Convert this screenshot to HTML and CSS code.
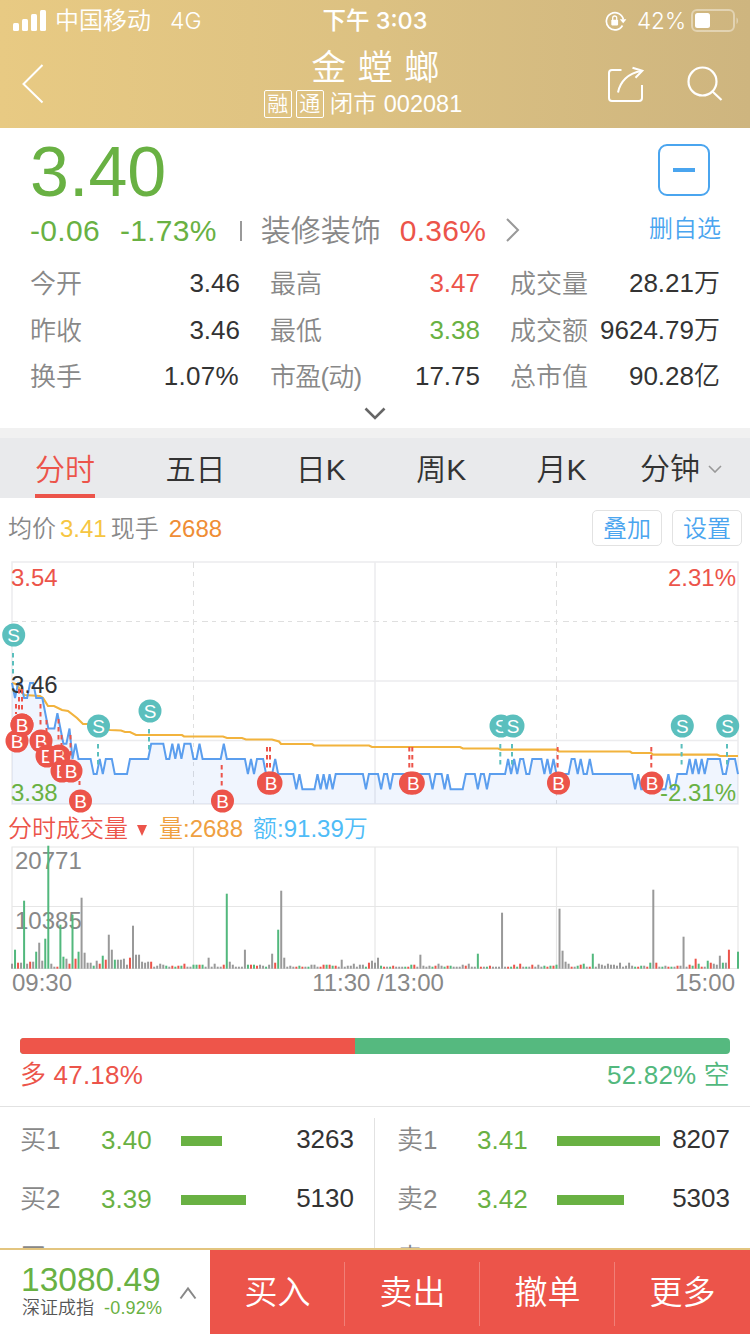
FILE: index.html
```html
<!DOCTYPE html>
<html lang="zh-CN">
<head>
    <meta charset="UTF-8">
    <meta name="viewport" content="width=device-width, initial-scale=1.0">
    <title>金螳螂 002081</title>
    <link rel="stylesheet" href="styles.css">
</head>
<body>

    <header class="header">
        <div class="status">
            <div class="status-left">
                <svg width="34" height="22" viewBox="0 0 34 22" fill="#fff">
                    <rect x="0" y="13" width="6" height="8" rx="1.5"/>
                    <rect x="9" y="9" width="6" height="12" rx="1.5"/>
                    <rect x="18" y="4" width="6" height="17" rx="1.5"/>
                    <rect x="27" y="0" width="6" height="21" rx="1.5"/>
                </svg>
                <span class="carrier">中国移动</span>
                <span class="network">4G</span>
            </div>
            <div class="status-time">下午 3:03</div>
            <div class="status-right">
                <svg width="22" height="20" viewBox="0 0 22 20" fill="none" stroke="#fff">
                    <path d="M17.5 14.5A8.6 8.6 0 1 1 18.4 8.5" stroke-width="1.7"/>
                    <path d="M14.8 8.2h6.6l-3.2 4z" fill="#fff" stroke="none"/>
                    <rect x="6.3" y="8.8" width="6.8" height="5.6" rx="0.8" fill="#fff" stroke="none"/>
                    <path d="M7.7 9V7a2 2 0 0 1 4 0v2" stroke-width="1.3"/>
                </svg>
                <span class="battery-text">42%</span>
                <svg width="48" height="24" viewBox="0 0 48 24" fill="none">
                    <rect x="1" y="1" width="42" height="21" rx="5" stroke="#fff" stroke-opacity="0.4" stroke-width="2"/>
                    <rect x="4" y="4" width="15" height="15" rx="2.5" fill="#fff"/>
                    <path d="M45.5 8.5c2 1 2 5.5 0 6.5z" fill="#fff" fill-opacity="0.4"/>
                </svg>
            </div>
        </div>
        <div class="nav">
            <svg class="back" width="22" height="40" viewBox="0 0 22 40" fill="none" stroke="#fff" stroke-width="2">
                <path d="M20.5 1L1.5 20L20.5 38.5"/>
            </svg>
            <div class="nav-title">
                <h1>金螳螂</h1>
                <p><i>融</i><i>通</i><span>闭市</span><span>002081</span></p>
            </div>
            <div class="nav-actions">
                <svg width="38" height="38" viewBox="0 0 38 38" fill="none" stroke="#fff" stroke-width="2">
                    <path d="M14.5 4H5a3 3 0 0 0-3 3v25a3 3 0 0 0 3 3h27a3 3 0 0 0 3-3V19"/>
                    <path d="M11 26.5C13 16 21 7 34.5 5"/>
                    <path d="M25.5 1.8L35.3 4.8L28.5 11.8"/>
                </svg>
                <svg width="36" height="36" viewBox="0 0 36 36" fill="none" stroke="#fff" stroke-width="2.2">
                    <circle cx="15.5" cy="15.5" r="14"/>
                    <path d="M25.5 25.5L34.5 34"/>
                </svg>
            </div>
        </div>
    </header>

    <section class="quote">
        <div class="quote-top">
            <div class="price green">3.40</div>
            <div class="remove"></div>
        </div>
        <div class="quote-change">
            <span class="green">-0.06</span>
            <span class="green percent">-1.73%</span>
            <span class="bar"></span>
            <span class="sector">装修装饰</span>
            <span class="red">0.36%</span>
            <svg width="14" height="24" viewBox="0 0 14 24" fill="none" stroke="#999" stroke-width="2">
                <path d="M1 1L12 12L1 23"/>
            </svg>
            <span class="remove-text">删自选</span>
        </div>
        <div class="stats">
            <div><span>今开</span><b>3.46</b></div>
            <div><span>最高</span><b class="red">3.47</b></div>
            <div><span>成交量</span><b>28.21万</b></div>
            <div><span>昨收</span><b>3.46</b></div>
            <div><span>最低</span><b class="green">3.38</b></div>
            <div><span>成交额</span><b>9624.79万</b></div>
            <div><span>换手</span><b class="pct">1.07%</b></div>
            <div><span class="pe">市盈(动)</span><b>17.75</b></div>
            <div><span>总市值</span><b>90.28亿</b></div>
        </div>
        <svg class="more" width="22" height="14" viewBox="0 0 22 14" fill="none" stroke="#666" stroke-width="2.6">
            <path d="M1.5 1.5L11 11L20.5 1.5"/>
        </svg>
    </section>

    <nav class="tabs">
        <a class="active">分时</a>
        <a>五日</a>
        <a>日K</a>
        <a>周K</a>
        <a>月K</a>
        <a class="minutes">分钟
            <svg width="14" height="8" viewBox="0 0 14 8" fill="none" stroke="#999" stroke-width="1.6">
                <path d="M1 1L7 7L13 1"/>
            </svg>
        </a>
    </nav>

    <div class="chart-info">
        <span>均价</span>
        <span class="avg">3.41</span>
        <span>现手</span>
        <span class="hands">2688</span>
        <div class="chart-buttons">
            <button>叠加</button>
            <button>设置</button>
        </div>
    </div>

    <svg class="chart" id="priceChart" width="750" height="252" viewBox="0 560 750 252"></svg>

    <div class="volume-info">
        <span class="red">分时成交量</span>
        <svg width="10" height="11" viewBox="0 0 10 11"><path d="M0 0h10l-5 11z" fill="#ec544a"/></svg>
        <span class="vol">量:2688</span>
        <span class="amount">额:91.39万</span>
    </div>

    <svg class="chart" id="volumeChart" width="750" height="125" viewBox="0 845 750 125"></svg>

    <div class="time-axis">
        <span>09:30</span>
        <span class="noon">11:30 /13:00</span>
        <span>15:00</span>
    </div>

    <div class="ratio">
        <div class="ratio-bar"><div class="ratio-buy" style="width: 47.18%"></div></div>
        <div class="ratio-text">
            <span class="red">多 47.18%</span>
            <span class="teal">52.82% 空</span>
        </div>
    </div>

    <section class="orders">
        <div class="side" id="buy"></div>
        <div class="side" id="sell"></div>
    </section>

    <footer class="footer">
        <div class="index">
            <div>
                <div class="index-value green">13080.49</div>
                <div class="index-name">深证成指 <span class="green">-0.92%</span></div>
            </div>
            <svg width="18" height="14" viewBox="0 0 18 14" fill="none" stroke="#888" stroke-width="2">
                <path d="M1.5 12.5L9 2.5L16.5 12.5"/>
            </svg>
        </div>
        <a>买入</a>
        <a>卖出</a>
        <a>撤单</a>
        <a>更多</a>
    </footer>

    <script>
        const left = 12;
        const step = 726 / 240;

        // Price per minute, in cents above 3.38
        const prices =
            '878877887776555654453433333223' +
            '233322222333333344444334343444' +
            '334333333343333333232333222322' +
            '222212111112121212222222222122' +
            '221221222222222222212221211111' +
            '222212212222223232332233332323' +
            '222223323223222222222222221211' +
            '1111111211222232323233333223332';

        // Average price line
        const average = '12,683 16,684 19,688 24,695 40,696 43,698 48,706 54,706 62,710 68,711 ' +
            '77,718 83,724 90,724 100,728 110,730 121,730.5 125,732 130,732 136,735 182,735 184,736.5 ' +
            '223,736.5 227,738 242,738 246,739.5 272,739.5 279,741.5 281,744 312,744 314,745.5 369,745.5 ' +
            '372,747 460,747 463,748.5 498,748.5 501,749.7 557,749.7 559,751.5 630,751.5 632,753 651,753 ' +
            '653,754.7 717,754.7 720,756 738,756';

        // Trade marks: type, badge x, badge y, stem x, stem top, stem bottom
        // An empty type is a badge hidden under the next one
        const marks = [
            ['S', 13.7, 635, 13, 653, 674],
            ['B', 17, 741, 16, 704, 714],
            ['', 22, 725, 19, 689, 710],
            ['B', 22, 725, 22, 689, 710],
            ['B', 41, 741, 40.5, 704, 725],
            ['B', 47, 756, 46.5, 720, 741],
            ['B', 59, 756, 58.5, 719, 740],
            ['B', 62, 771, 61.5, 735, 756],
            ['B', 71, 771, 70.5, 735, 756],
            ['B', 80.5, 801, 79.5, 765, 785],
            ['S', 98.5, 726, 98, 744, 765],
            ['S', 150, 711, 149, 729, 750],
            ['B', 222.5, 801, 221.7, 765, 786],
            ['', 268.5, 783, 267, 747, 768],
            ['B', 271, 783, 270, 747, 768],
            ['', 410.5, 783, 409.3, 747, 768],
            ['B', 413.3, 783, 412.3, 747, 768],
            ['S', 501, 726, 500.3, 744, 765],
            ['S', 513, 726, 512, 744, 765],
            ['B', 558.5, 783, 557.6, 747, 768],
            ['B', 652, 783, 651.3, 747, 768],
            ['S', 682.3, 726, 681.6, 744, 765],
            ['S', 727.7, 726, 727, 744, 765]
        ];

        // Volume per minute: n = flat, g = down, r = up
        const volumes = ('n5 g19 r6 n6 g68 n5 r7 n7 g17 n26 n8 g30 g123 n5 n2 r2 g44 g12 n10 r5 ' +
            'g54 r10 g17 n71 n16 n6 n6 g3 n8 r5 g13 r9 n34 n19 g9 n9 n9 n10 n4 r11 ' +
            'n43 n14 n14 n7 n6 n7 r7 n2 n3 n5 n4 g3 n2 r3 g2 r3 g3 r5 n2 n2 ' +
            'g4 g4 r4 g4 n2 n11 n2 n5 n2 n2 r4 g75 n7 n4 n2 n2 n2 n19 g4 r4 ' +
            'g4 r3 n4 n3 g2 n4 n15 r6 g39 n78 n11 n2 n3 n2 r2 g3 r2 n2 g2 n4 ' +
            'n4 n2 r2 r4 g4 r4 g3 r3 n2 n9 n2 n3 n3 n5 n2 n4 n4 g2 r6 n8 ' +
            'n6 n11 g3 r2 n2 g2 r3 n2 n2 n2 g2 r2 g4 r4 n2 n14 n3 n2 n3 g2 ' +
            'r3 n5 n3 g2 r3 g3 n2 n2 n2 n4 r3 n5 n2 n2 g15 r2 n2 g2 r3 n2 ' +
            'n2 n2 n56 n2 r2 g2 r4 g2 r5 n2 g2 n2 r4 n2 n4 n2 g3 r2 g3 r3 ' +
            'g4 n60 n18 n7 n5 r2 n2 g3 r4 g5 n2 r2 g15 n2 n5 n4 n3 n5 n4 n4 ' +
            'n3 n6 n2 n3 n6 n3 g2 r2 g3 n3 r2 g6 n79 r6 n2 g2 n3 r2 g2 n2 ' +
            'r3 n3 n32 n2 r4 g3 r10 g5 r2 n2 g8 r6 n5 n4 n13 g6 n6 r19 n0 n0 g17').split(' ');

        const priceY = level => 804.5 - level * 15.2;
        const points = prices.split('').map((p, i) => `${(left + i * step).toFixed(1)},${priceY(+p).toFixed(1)}`).join(' ');

        let svg = `
            <g stroke="#ececee" stroke-width="1.5" fill="none">
                <path d="M12 562H738V804H12Z M12 681H738 M12 740.5H738 M375 562V804"/>
                <path d="M12 621.5H738 M193.5 562V804 M556.5 562V804" stroke="#dfdfdf" stroke-width="1" stroke-dasharray="6 4 4 5"/>
            </g>
            <polygon points="12,804 ${points} 738,804" fill="#3c82ee" fill-opacity="0.08"/>
            <polyline points="${average}" fill="none" stroke="#f2b33d" stroke-width="2.2"/>
            <polyline points="${points}" fill="none" stroke="#5b9eee" stroke-width="2"/>
            <text x="11" y="693" fill="#333">3.46</text>
            <text x="11" y="586" fill="#ec544a">3.54</text>
            <text x="11" y="801" fill="#69b143">3.38</text>
            <text x="736" y="586" fill="#ec544a" text-anchor="end">2.31%</text>`;

        marks.forEach(([type, x, y, sx, top, bottom]) => {
            const color = type === 'S' ? '#5bbfbd' : '#ec544a';
            svg += `
                <path d="M${sx} ${top}V${bottom}" stroke="${color}" stroke-width="2" stroke-dasharray="4.5 3.5"/>
                <circle cx="${x}" cy="${y}" r="11.5" fill="${color}"/>
                <text class="mark" x="${x}" y="${y + 7}">${type}</text>`;
        });
        svg += '<text x="736" y="801" fill="#69b143" text-anchor="end">-2.31%</text>';
        document.getElementById('priceChart').innerHTML = svg;

        const volumeColors = { n: '#999', g: '#52b87d', r: '#ec544a' };
        svg = `
            <path d="M12 847H738V968.5H12Z M12 906.5H738 M193.5 847V968 M375 847V968 M556.5 847V968" fill="none" stroke="#e6e6e6" stroke-width="1.2"/>
            <text x="15" y="869" fill="#888">20771</text>
            <text x="15" y="929" fill="#888">10385</text>`;
        volumes.forEach((v, i) => {
            const h = +v.slice(1);
            svg += `<rect x="${(left - 1 + i * step).toFixed(2)}" y="${968.7 - h}" width="2" height="${h}" fill="${volumeColors[v[0]]}"/>`;
        });
        document.getElementById('volumeChart').innerHTML = svg;

        // Order book: label, price, bar width, amount
        const orders = {
            buy: [['买1', '3.40', 41, 3263], ['买2', '3.39', 65, 5130], ['买3', '3.38', 0, 3150]],
            sell: [['卖1', '3.41', 103, 8207], ['卖2', '3.42', 67, 5303], ['卖3', '3.43', 0, 5698]]
        };
        Object.keys(orders).forEach(side => {
            document.getElementById(side).innerHTML = orders[side].map(([label, price, width, amount]) => `
                <div class="order">
                    <span class="label">${label}</span>
                    <span class="green">${price}</span>
                    <span><div class="order-bar" style="width: ${width}px"></div></span>
                    <span class="amount-value">${amount}</span>
                </div>`).join('');
        });
    </script>
</body>
</html>
```
FILE: styles.css
```css
* {
    box-sizing: border-box;
}
body {
    font-family: 'Liberation Sans', 'Noto Sans CJK SC', sans-serif;
    font-weight: 350;
    margin: 0;
    background-color: white;
    color: #333;
    height: 1334px;
    overflow: hidden;
    display: flex;
    flex-direction: column;
}
svg {
    display: block;
    flex-shrink: 0;
}
span {
    white-space: nowrap;
}
.green {
    color: #69b143;
}
.red {
    color: #ec544a;
}
.teal {
    color: #52b87d;
}

/* Header */
.header {
    height: 128px;
    flex-shrink: 0;
    background: linear-gradient(90deg, #e8ca83, #dcc182 50%, #ceb57f);
    color: white;
}
.status {
    height: 40px;
    display: grid;
    grid-template-columns: 1fr 120px 1fr;
    align-items: center;
    font-family: Inter, 'Noto Sans CJK SC', sans-serif;
    font-size: 24px;
    line-height: 42px;
}
.status-left {
    display: flex;
    align-items: center;
    padding-left: 13px;
}
.carrier {
    margin: 0 19px 0 8px;
}
.network {
    font-size: 23px;
}
.status-time {
    text-align: center;
    font-weight: 500;
    font-size: 23.5px;
    white-space: nowrap;
}
.status-right {
    display: flex;
    align-items: center;
    justify-content: flex-end;
    padding-right: 11px;
}
.battery-text {
    margin: 0 5px 0 10px;
    font-size: 22.5px;
}
.nav {
    height: 88px;
    display: grid;
    grid-template-columns: 200px 1fr 200px;
}
.back {
    margin: 24px 0 0 22px;
}
.nav-title {
    text-align: center;
}
.nav-title h1 {
    margin: 3px 0 0;
    padding-left: 12px;
    font-size: 35px;
    font-weight: 350;
    line-height: 50px;
    letter-spacing: 11.5px;
}
.nav-title p {
    margin: -5px 0 0 51px;
    display: flex;
    justify-content: center;
    align-items: center;
    width: 224px;
    font-size: 23.5px;
    line-height: 32px;
}
.nav-title i {
    width: 28px;
    height: 28px;
    margin: -1px 4px 0 0;
    border: 1px solid white;
    border-radius: 2px;
    font-size: 21px;
    line-height: 26px;
    font-style: normal;
}
.nav-title span {
    margin-left: 2px;
    margin-right: 5px;
}
.nav-title span:last-child {
    margin-right: 0;
}
.nav-actions {
    display: flex;
    align-items: flex-start;
    justify-content: flex-end;
    gap: 42px;
    padding: 26px 27px 0 0;
}

/* Quote */
.quote {
    height: 300px;
    flex-shrink: 0;
    padding: 0 30px;
}
.quote-top {
    display: flex;
    justify-content: space-between;
    height: 78px;
    padding: 16px 10px 0 0;
}
.price {
    font-size: 70px;
    line-height: 57px;
}
.remove {
    width: 52px;
    height: 52px;
    border: 2px solid #4aa5ef;
    border-radius: 9px;
    display: flex;
    align-items: center;
    justify-content: center;
}
.remove::before {
    content: '';
    width: 22px;
    height: 4px;
    background-color: #4aa5ef;
}
.quote-change {
    display: flex;
    align-items: center;
    height: 50px;
    font-size: 30px;
    line-height: 54px;
}
.quote-change .green,
.quote-change .red {
    letter-spacing: 0.3px;
}
.percent {
    margin-left: 20px;
}
.bar {
    width: 2px;
    height: 20px;
    margin: 0 19px 0 23px;
    background-color: #999;
}
.sector {
    margin-right: 19px;
    color: #888;
}
.quote-change svg {
    margin: -2px 0 0 20px;
}
.remove-text {
    margin: -4px -1px 0 auto;
    color: #4aa5ef;
    font-size: 24px;
}
.stats {
    display: grid;
    grid-template-columns: repeat(3, 210px);
    grid-auto-rows: 46.5px;
    column-gap: 30px;
    padding-top: 4px;
    font-size: 26px;
    line-height: 46px;
}
.stats div {
    display: flex;
    justify-content: space-between;
}
.stats span {
    color: #888;
    line-height: 48px;
}
.stats .pe {
    letter-spacing: -0.8px;
}
.stats b {
    font-weight: 350;
    white-space: nowrap;
}
.stats .pct {
    margin-right: 1px;
    letter-spacing: 0.3px;
}
.more {
    margin: 7px auto 0;
}

/* Tabs */
.tabs {
    height: 70px;
    flex-shrink: 0;
    display: flex;
    gap: 70.4px;
    padding-left: 35px;
    border-top: 10px solid #f1f1f1;
    background-color: #e9eaec;
    font-size: 30px;
    line-height: 64px;
}
.tabs a {
    white-space: nowrap;
}
.tabs .active {
    height: 60px;
    color: #ec544a;
    border-bottom: 4px solid #ec544a;
}
.minutes {
    display: flex;
    align-items: center;
    gap: 8px;
    height: 62px;
    margin-left: -17px;
}

/* Chart */
.chart-info {
    height: 62px;
    flex-shrink: 0;
    display: flex;
    align-items: center;
    padding: 0 8px;
    color: #888;
    font-size: 24px;
}
.chart-info span {
    line-height: 60px;
}
.avg {
    margin: 0 4px;
    color: #f6c642;
}
.hands {
    margin-left: 10px;
    color: #ef8d35;
}
.chart-buttons {
    display: flex;
    gap: 10px;
    margin: -2px 0 0 auto;
}
.chart-buttons button {
    width: 70px;
    height: 36px;
    padding: 0;
    border: 1px solid #e2e2e2;
    border-radius: 5px;
    background-color: white;
    color: #4aa5ef;
    font: inherit;
    line-height: 36px;
}
.chart {
    overflow: visible;
    font-size: 24px;
}
.chart .mark {
    fill: white;
    font-size: 19px;
    text-anchor: middle;
}
.volume-info {
    height: 33px;
    flex-shrink: 0;
    display: flex;
    align-items: center;
    padding-left: 8px;
    font-size: 24px;
    line-height: 34px;
}
.volume-info svg {
    margin: 3px 12px 0 9px;
}
.vol {
    color: #efa041;
}
.amount {
    margin-left: 10px;
    color: #4fbcf7;
}
.time-axis {
    height: 68px;
    flex-shrink: 0;
    display: flex;
    justify-content: space-between;
    padding: 0 15px 0 12px;
    color: #888;
    font-size: 24px;
    line-height: 26px;
}
.noon {
    padding-left: 9px;
}

/* Buy / sell ratio */
.ratio {
    height: 68px;
    flex-shrink: 0;
    padding: 0 20px;
}
.ratio-bar {
    height: 16px;
    border-radius: 4px;
    background-color: #55b97f;
    overflow: hidden;
}
.ratio-buy {
    height: 16px;
    background-color: #ee554a;
}
.ratio-text {
    display: flex;
    justify-content: space-between;
    font-size: 26px;
    line-height: 42px;
    letter-spacing: 0.2px;
}

/* Order book */
.orders {
    height: 142px;
    flex-shrink: 0;
    display: grid;
    grid-template-columns: 375px 375px;
    border-top: 1px solid #e2e2e2;
    overflow: hidden;
}
.side {
    padding: 3px 21px 0 20px;
    font-size: 26px;
}
.side:first-child {
    position: relative;
}
.side:first-child::after {
    content: '';
    position: absolute;
    top: 11px;
    right: 0;
    width: 1px;
    height: 200px;
    background-color: #e2e2e2;
}
.side:last-child {
    padding: 3px 20px 0 22px;
}
.order {
    display: grid;
    grid-template-columns: 80px 80px 1fr auto;
    align-items: center;
    height: 59px;
    line-height: 59px;
}
.side:first-child .order {
    grid-template-columns: 81px 80px 1fr auto;
}
.label {
    margin-top: 1px;
    color: #888;
}
.amount-value {
    margin-top: -2px;
}
.order-bar {
    height: 10px;
    margin-top: 2px;
    background-color: #69b143;
}

/* Footer */
.footer {
    height: 86px;
    flex-shrink: 0;
    display: grid;
    grid-template-columns: 210px repeat(4, 135px);
    border-top: 2px solid #e3c57f;
    background-color: #ec544a;
    color: white;
}
.index {
    display: flex;
    align-items: center;
    padding: 0 13px 8px 22px;
    background-color: white;
}
.index svg {
    margin: 8px 0 0 auto;
}
.index-value {
    margin-left: -1px;
    font-size: 33.5px;
    line-height: 38px;
}
.index-name {
    color: #555;
    font-size: 18px;
    line-height: 18px;
    white-space: nowrap;
}
.index-name span {
    margin-left: 5px;
    letter-spacing: 0.2px;
}
.footer a {
    position: relative;
    text-align: center;
    font-size: 33px;
    line-height: 86px;
}
.footer a + a::before {
    content: '';
    position: absolute;
    left: -1px;
    top: 12px;
    width: 1px;
    height: 64px;
    background-color: rgba(255, 255, 255, 0.25);
}
```
